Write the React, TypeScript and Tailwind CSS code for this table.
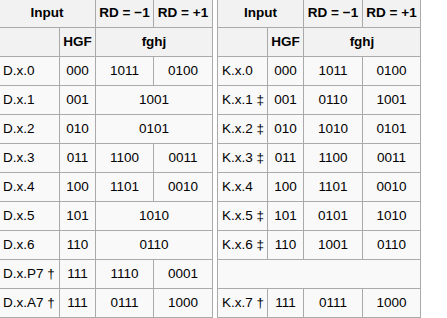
type Row = { name: string; hgf: string; cells: string[] } | null;

const left: Row[] = [
  { name: 'D.x.0', hgf: '000', cells: ['1011', '0100'] },
  { name: 'D.x.1', hgf: '001', cells: ['1001'] },
  { name: 'D.x.2', hgf: '010', cells: ['0101'] },
  { name: 'D.x.3', hgf: '011', cells: ['1100', '0011'] },
  { name: 'D.x.4', hgf: '100', cells: ['1101', '0010'] },
  { name: 'D.x.5', hgf: '101', cells: ['1010'] },
  { name: 'D.x.6', hgf: '110', cells: ['0110'] },
  { name: 'D.x.P7 †', hgf: '111', cells: ['1110', '0001'] },
  { name: 'D.x.A7 †', hgf: '111', cells: ['0111', '1000'] },
];

const right: Row[] = [
  { name: 'K.x.0', hgf: '000', cells: ['1011', '0100'] },
  { name: 'K.x.1 ‡', hgf: '001', cells: ['0110', '1001'] },
  { name: 'K.x.2 ‡', hgf: '010', cells: ['1010', '0101'] },
  { name: 'K.x.3 ‡', hgf: '011', cells: ['1100', '0011'] },
  { name: 'K.x.4', hgf: '100', cells: ['1101', '0010'] },
  { name: 'K.x.5 ‡', hgf: '101', cells: ['0101', '1010'] },
  { name: 'K.x.6 ‡', hgf: '110', cells: ['1001', '0110'] },
  null,
  { name: 'K.x.7 †', hgf: '111', cells: ['0111', '1000'] },
];

const th = 'border border-[#aaaaaa] bg-[#f2f2f2] font-bold text-center p-0 h-[29px]';
const td = 'border border-[#aaaaaa] bg-[#f9f9f9] text-center p-0 h-[29px]';

function CodeTable({ rows, widths }: { rows: Row[]; widths: string[] }) {
  return (
    <table className="border-collapse table-fixed text-[13.5px] text-black">
      <colgroup>
        {widths.map((w, i) => (
          <col key={i} className={w} />
        ))}
      </colgroup>
      <thead>
        <tr>
          <th colSpan={2} className={th}>Input</th>
          <th className={th}>RD = −1</th>
          <th className={th}>RD = +1</th>
        </tr>
        <tr>
          <th className={th}></th>
          <th className={th}>HGF</th>
          <th colSpan={2} className={th}>fghj</th>
        </tr>
      </thead>
      <tbody>
        {rows.map((r, i) =>
          r ? (
            <tr key={i}>
              <td className={`${td} text-left pl-[4px] whitespace-nowrap`}>{r.name}</td>
              <td className={td}>{r.hgf}</td>
              {r.cells.length === 1 ? (
                <td colSpan={2} className={td}>{r.cells[0]}</td>
              ) : (
                r.cells.map((c, j) => (
                  <td key={j} className={td}>{c}</td>
                ))
              )}
            </tr>
          ) : (
            <tr key={i}>
              <td colSpan={4} className={td}></td>
            </tr>
          )
        )}
      </tbody>
    </table>
  );
}

export default function App() {
  return (
    <div className="w-[447px] h-[318px] overflow-hidden bg-white font-['Liberation_Sans',Arial,sans-serif]">
      <div className="flex items-start gap-[4px] -ml-[2px] -mt-[2px]">
        <CodeTable rows={left} widths={['w-[61px]', 'w-[36px]', 'w-[58px]', 'w-[59px]']} />
        <CodeTable rows={right} widths={['w-[50px]', 'w-[36px]', 'w-[59px]', 'w-[58px]']} />
      </div>
    </div>
  );
}
